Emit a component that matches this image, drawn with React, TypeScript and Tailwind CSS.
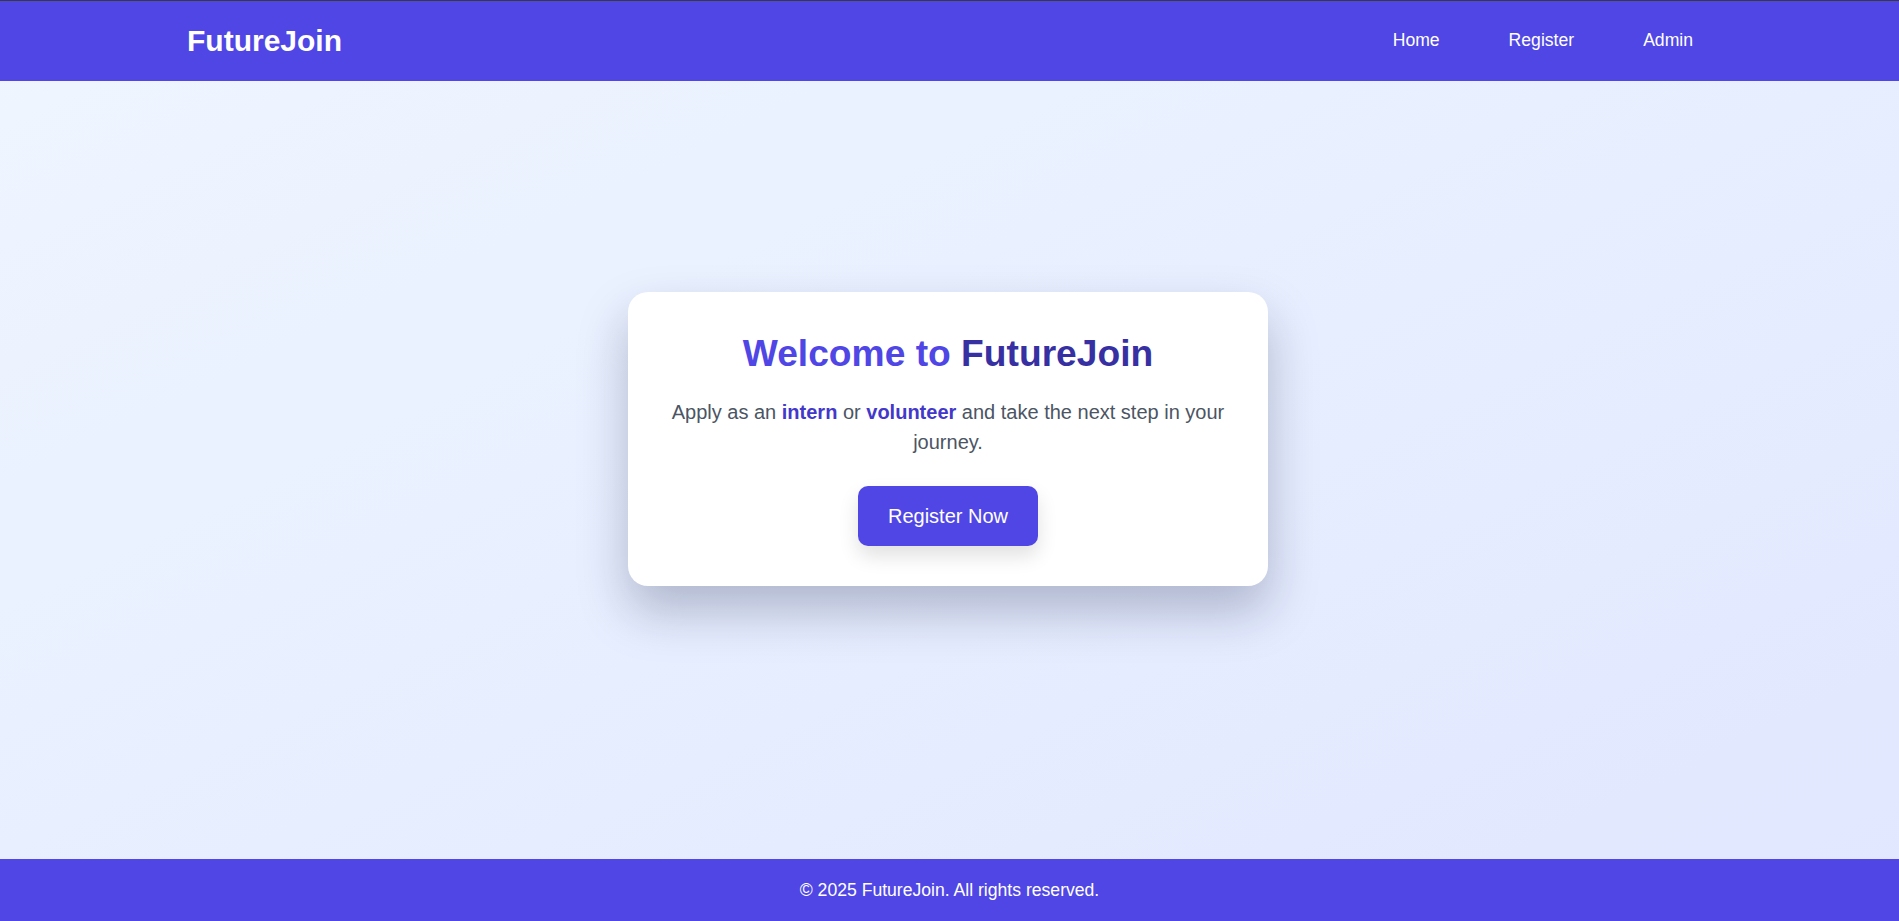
import React from 'react';

const links = ['Home', 'Register', 'Admin'];

export default function App() {
  return (
    <div className="min-h-screen flex flex-col font-['Liberation_Sans',Arial,sans-serif] bg-gradient-to-br from-[#eff6ff] to-[#e0e7ff]">
      {/* Header */}
      <header className="h-[81px] border-t border-[#3a3a3a] bg-[#4f46e5] flex items-center justify-between pl-[187px] pr-[206px]">
        <h1 className="text-[30px] font-bold text-white leading-none">FutureJoin</h1>
        <nav className="flex items-center gap-[69px]">
          {links.map((l) => (
            <a key={l} href="#" className="text-[17.6px] text-white leading-none">
              {l}
            </a>
          ))}
        </nav>
      </header>

      {/* Main */}
      <main className="flex-1 flex items-center justify-center pb-[62px] pr-[3px]">
        <div className="w-[640px] bg-white rounded-[20px] p-10 text-center shadow-[0_25px_50px_rgba(15,23,60,0.26)]">
          <h2 className="text-[37.2px] font-bold leading-[1.15]">
            <span className="text-[#4f46e5]">Welcome to </span>
            <span className="text-[#3730a3]">FutureJoin</span>
          </h2>
          <p className="mt-[23px] text-[20px] leading-[30px] text-[#4b5563]">
            Apply as an <strong className="font-bold text-[#4338ca]">intern</strong> or{' '}
            <strong className="font-bold text-[#4338ca]">volunteer</strong> and take the next step in your journey.
          </p>
          <button className="mt-[29px] h-[60px] px-[30px] rounded-[10px] bg-[#4f46e5] text-white text-[20px] shadow-[0_10px_20px_rgba(0,0,0,0.12)]">
            Register Now
          </button>
        </div>
      </main>

      {/* Footer */}
      <footer className="h-[62px] bg-[#4f46e5] flex items-center justify-center">
        <p className="text-[17.6px] text-white">© 2025 FutureJoin. All rights reserved.</p>
      </footer>
    </div>
  );
}
